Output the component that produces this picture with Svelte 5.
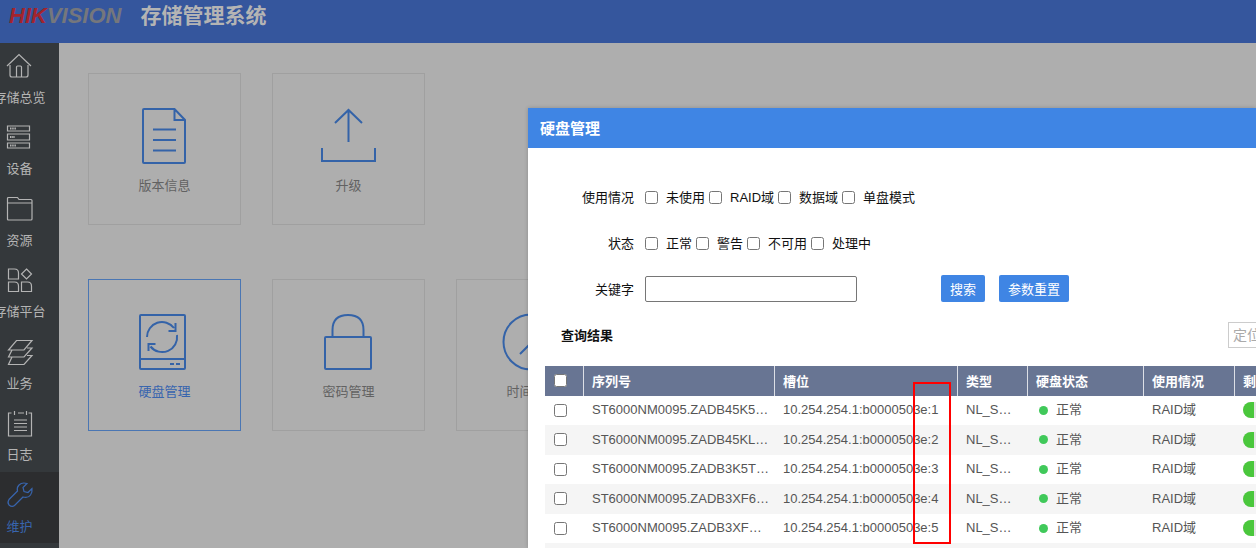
<script lang="ts">
	type Option = { id: string; text: string };

	const menu = [
		{ icon: 'home', text: '存储总览' },
		{ icon: 'device', text: '设备' },
		{ icon: 'folder', text: '资源' },
		{ icon: 'platform', text: '存储平台' },
		{ icon: 'layers', text: '业务' },
		{ icon: 'log', text: '日志' },
		{ icon: 'wrench', text: '维护' }
	];
	const activeMenu = '维护';

	const cardRows = [
		[
			{ icon: 'doc', text: '版本信息' },
			{ icon: 'upload', text: '升级' }
		],
		[
			{ icon: 'disk', text: '硬盘管理' },
			{ icon: 'lock', text: '密码管理' },
			{ icon: 'clock', text: '时间管理' }
		]
	];
	const activeCard = '硬盘管理';

	const filters: { label: string; options: Option[] }[] = [
		{
			label: '使用情况',
			options: [
				{ id: 'unused', text: '未使用' },
				{ id: 'raid', text: 'RAID域' },
				{ id: 'data', text: '数据域' },
				{ id: 'single', text: '单盘模式' }
			]
		},
		{
			label: '状态',
			options: [
				{ id: 'normal', text: '正常' },
				{ id: 'warning', text: '警告' },
				{ id: 'unavailable', text: '不可用' },
				{ id: 'processing', text: '处理中' }
			]
		}
	];

	const disks = [
		{ serial: 'ST6000NM0095.ZADB45K5…', slot: 1 },
		{ serial: 'ST6000NM0095.ZADB45KL…', slot: 2 },
		{ serial: 'ST6000NM0095.ZADB3K5T…', slot: 3 },
		{ serial: 'ST6000NM0095.ZADB3XF6…', slot: 4 },
		{ serial: 'ST6000NM0095.ZADB3XF…', slot: 5 }
	];

	let keyword = $state('');
	let position = $state('');
	let checked: string[] = $state([]);

	function reset() {
		keyword = '';
		checked = [];
	}
</script>

<div class="page">
	<header class="header">
		<span class="header__logo"><span class="header__logo-red">HIK</span>VISION</span>
		<h1 class="header__title">存储管理系统</h1>
	</header>

	<div class="layout">
		<nav class="menu">
			{#each menu as item}
				<a href="#{item.icon}" class="menu__item" class:menu__item--active={item.text === activeMenu}>
					<svg class="menu__icon" viewBox="1 0 26 26" aria-hidden="true">
						{#if item.icon === 'home'}
							<path d="M1 13 13 1.500 25 13M4 12v10q0 2 2 2h14q2 0 2-2V12M10.500 24V14q0-1 1-1h3q1 0 1 1v10" />
						{:else if item.icon === 'device'}
							<path d="M1.500 2h22v5h-22zM1.500 10h22v6h-22zM1.500 19h22v5h-22z" />
							<path d="M4 4.500h6M4 13h5M4 21.500h6" stroke-width="2" stroke-dasharray="1.500 .7" />
						{:else if item.icon === 'folder'}
							<path d="M1.500 7V2.500q0-1 1-1h9l1.500 2h12q1 0 1 1V23q0 1-1 1h-22.500q-1 0-1-1V7h24.500" />
						{:else if item.icon === 'platform'}
							<path d="M2.500 2h6q4 0 4 4v6h-10zM20.500 2l5 5-5 5-5-5zM2.500 15h6q4 0 4 4v5.500h-10zM15.500 15h6q4 0 4 4v5.500h-10z" />
						{:else if item.icon === 'layers'}
							<path d="M10.500 1.500H26L18 11H2.500zM6 11 2.500 18H18l8-9h-5M6 18l-3.500 7.500H18l8-9h-5" />
						{:else if item.icon === 'log'}
							<path d="M5.500 3h-3v23h23V3h-3M12 3h6M8.500 1v4M20.500 1v4M8 10h13M8 13.500h13M8 17h13M8 20.500h13" />
						{:else}
							<path
								d="M21 1.500q-5-1.500-8 1.500-2.500 2.500-1.500 6L3 17.500q-2 3 0 5.500 3 2.500 5.500.5L17 15q5 1.500 7.500-2 2-3 1.500-6.500l-4 4-4-1-1-4z"
							/>
						{/if}
					</svg>
					<span class="menu__text">{item.text}</span>
				</a>
			{/each}
		</nav>

		<main class="cards">
			{#each cardRows as row}
				<div class="cards__row">
					{#each row as card}
						<a href="#{card.icon}" class="card" class:card--active={card.text === activeCard}>
							<svg class="card__icon" viewBox="1 0 56 56" aria-hidden="true">
								{#if card.icon === 'doc'}
									<path d="M38.500 1H8q-1 0-1 1v52q0 1 1 1h40q1 0 1-1V12zM38.500 1v11H49M17 21.500h23M17 32h23M17 42.500h23" />
								{:else if card.icon === 'upload'}
									<path d="M28.500 34V2M15 15 28.500 2 42 15M2 40v13h53V40" />
								{:else if card.icon === 'disk'}
									<path d="M5 1h43q1 0 1 1v52q0 1-1 1H5q-1 0-1-1V2q0-1 1-1zM4 45h45M34 50h4M40 50h4" />
									<path d="M11 23A15 15 0 0 1 38 14M39.500 9v8h-7M41 21A15 15 0 0 1 14.500 32.500M12.500 37v-7h7" />
								{:else if card.icon === 'lock'}
									<path d="M6 23h44q1 0 1 1v30q0 1-1 1H6q-1 0-1-1V24q0-1 1-1zM12.500 23v-7q0-15 15.500-15t15.500 15v7" />
								{:else}
									<circle cx="27" cy="28" r="27.500" />
									<path d="M16 40 28 28V10" />
								{/if}
							</svg>
							<span class="card__text">{card.text}</span>
						</a>
					{/each}
				</div>
			{/each}
		</main>
	</div>

	<section class="dialog" aria-labelledby="dialog-title">
		<h2 id="dialog-title" class="dialog__title">硬盘管理</h2>

		<form class="filter" onsubmit={(event) => event.preventDefault()}>
			{#each filters as filter}
				<div class="filter__row" role="group" aria-label={filter.label}>
					<span class="filter__label">{filter.label}</span>
					{#each filter.options as option}
						<label class="filter__option">
							<input type="checkbox" class="checkbox" value={option.id} bind:group={checked} />
							{option.text}
						</label>
					{/each}
				</div>
			{/each}
			<div class="filter__row">
				<label for="keyword" class="filter__label">关键字</label>
				<input id="keyword" type="text" class="filter__input" bind:value={keyword} />
				<div class="filter__buttons">
					<button type="submit" class="button">搜索</button>
					<button type="button" class="button" onclick={reset}>参数重置</button>
				</div>
			</div>
		</form>

		<div class="result">
			<h3 class="result__title">查询结果</h3>
			<input
				type="text"
				class="result__search"
				placeholder="定位"
				aria-label="定位"
				bind:value={position}
			/>
		</div>

		<div class="result__body">
			<table class="table">
				<colgroup>
					<col class="table__col-check" />
					<col class="table__col-serial" />
					<col class="table__col-slot" />
					<col class="table__col-type" />
					<col class="table__col-status" />
					<col class="table__col-usage" />
					<col class="table__col-life" />
				</colgroup>
				<thead>
					<tr>
						<th><input type="checkbox" class="checkbox" aria-label="全选" /></th>
						<th>序列号</th>
						<th>槽位</th>
						<th>类型</th>
						<th>硬盘状态</th>
						<th>使用情况</th>
						<th>剩余</th>
					</tr>
				</thead>
				<tbody>
					{#each disks as disk}
						<tr>
							<td><input type="checkbox" class="checkbox" aria-label={disk.serial} /></td>
							<td>{disk.serial}</td>
							<td>10.254.254.1:b0000503e:{disk.slot}</td>
							<td>NL_S…</td>
							<td><span class="status">正常</span></td>
							<td>RAID域</td>
							<td><div class="life"><div class="life__value"></div></div></td>
						</tr>
					{/each}
					<tr><td colspan="7"></td></tr>
				</tbody>
			</table>
			<div class="marker"></div>
		</div>
	</section>
</div>

<style>
	:global(body) {
		background: #fff;
	}

	.page {
		position: relative;
		display: flex;
		flex-direction: column;
		height: 100vh;
		margin-right: 3px;
		overflow: hidden;
		background: #aeaeae;
		font-family: 'Liberation Sans', 'Noto Sans CJK SC', sans-serif;
		font-size: 13px;
	}

	.header {
		display: flex;
		flex: none;
		align-items: center;
		gap: 19px;
		box-sizing: border-box;
		height: 43px;
		padding: 0 0 12px 9px;
		background: #35569d;
		color: #b4b4b4;
	}

	.header__logo {
		color: #75777c;
		font-size: 22px;
		font-style: italic;
		font-weight: bold;
	}

	.header__logo-red {
		color: #a3242d;
	}

	.header__title {
		margin: 0;
		font-size: 21px;
		line-height: 30px;
	}

	.layout {
		display: flex;
		flex: 1;
		min-height: 0;
	}

	/* The menu is scrolled slightly past the left edge */
	.menu {
		display: flex;
		flex: none;
		flex-direction: column;
		box-sizing: border-box;
		width: 79px;
		margin-left: -20px;
		padding-bottom: 5px;
		background: #34383b;
	}

	.menu__item {
		display: flex;
		flex: 1;
		flex-direction: column;
		align-items: center;
		gap: 9px;
		box-sizing: border-box;
		padding-top: 10px;
		color: #b4b4b4;
		text-decoration: none;
	}

	.menu__item--active {
		background: #2c2d2f;
		color: #3865ae;
	}

	.menu__icon {
		flex: none;
		width: 26px;
		height: 26px;
		overflow: visible;
		fill: none;
		stroke: currentColor;
		stroke-width: 1.2;
	}

	.menu__text {
		line-height: 20px;
		white-space: nowrap;
	}

	.cards {
		display: flex;
		flex-direction: column;
		gap: 54px;
		padding: 30px 29px;
	}

	.cards__row {
		display: flex;
		gap: 31px;
	}

	.card {
		display: flex;
		flex: none;
		flex-direction: column;
		align-items: center;
		gap: 12px;
		box-sizing: border-box;
		width: 153px;
		height: 152px;
		padding-top: 34px;
		border: 1px solid #a0a0a0;
		color: #626262;
		text-decoration: none;
	}

	.card--active {
		border-color: #4a76b3;
		color: #3865ae;
	}

	.card__icon {
		flex: none;
		width: 56px;
		height: 56px;
		overflow: visible;
		fill: none;
		stroke: #3463a8;
		stroke-width: 2;
	}

	.card__text {
		line-height: 20px;
	}

	.dialog {
		position: absolute;
		top: 108px;
		right: 0;
		bottom: 0;
		left: 528px;
		overflow: hidden;
		background: #fff;
		box-shadow: 0 0 4px rgba(0, 0, 0, 0.2);
		color: #111;
	}

	.dialog__title {
		margin: 0;
		padding-left: 12px;
		background: #3f85e4;
		color: #fff;
		font-size: 15px;
		line-height: 41px;
		height: 40px;
	}

	.filter {
		display: flex;
		flex-direction: column;
		gap: 18px;
		padding-top: 34px;
	}

	.filter__row {
		display: flex;
		align-items: center;
		gap: 4px;
		height: 28px;
	}

	.filter__label {
		width: 106px;
		margin-right: 7px;
		text-align: right;
	}

	.filter__option {
		display: flex;
		align-items: center;
		gap: 8px;
	}

	.checkbox {
		width: 13px;
		height: 13px;
		margin: 0;
	}

	.filter .checkbox {
		margin-top: 2px;
	}

	.filter__input {
		box-sizing: border-box;
		width: 212px;
		height: 26px;
		margin: 2px 0 0;
		border: 1px solid #767676;
		border-radius: 2px;
	}

	.filter__buttons {
		display: flex;
		gap: 14px;
		margin-left: 80px;
	}

	.button {
		height: 27px;
		padding: 0 9px;
		border: none;
		border-radius: 2px;
		background: #3f85e4;
		color: #fff;
		font-family: inherit;
		font-size: 13px;
	}

	.result {
		display: flex;
		align-items: center;
		justify-content: space-between;
		height: 28px;
		margin-top: 19px;
		padding-left: 33px;
	}

	.result__title {
		margin: 0;
		padding-bottom: 2px;
		font-size: 13px;
	}

	.result__search {
		box-sizing: border-box;
		width: 150px;
		height: 26px;
		margin-right: -122px;
		padding: 0 4px;
		border: 1px solid #ccc;
		font-family: inherit;
		font-size: 14px;
	}

	.result__search::placeholder {
		color: #aaa;
	}

	.result__body {
		position: relative;
		margin: 17px 0 0 17px;
	}

	.table {
		width: 800px;
		border-collapse: separate;
		border-spacing: 0;
		table-layout: fixed;
		color: #555;
	}

	.table__col-check {
		width: 39px;
	}

	.table__col-serial {
		width: 191px;
	}

	.table__col-slot {
		width: 183px;
	}

	.table__col-type {
		width: 70px;
	}

	.table__col-status {
		width: 116px;
	}

	.table__col-usage {
		width: 91px;
	}

	.table th {
		height: 30px;
		padding: 0 8px 2px;
		border-right: 1px solid #dcdfe6;
		box-sizing: border-box;
		background: #687593;
		color: #fff;
		text-align: left;
	}

	.table td {
		box-sizing: border-box;
		height: 29px;
		padding: 0 8px 1px;
		line-height: 20px;
		white-space: nowrap;
	}

	.table tr:nth-child(even) td {
		height: 30px;
		background: #f5f5f5;
	}

	.table .checkbox {
		display: block;
		margin-left: 1px;
	}

	.status {
		display: flex;
		align-items: center;
		gap: 8px;
		padding-left: 3px;
	}

	.status::before {
		content: '';
		width: 9px;
		height: 9px;
		border-radius: 50%;
		background: #40c95a;
	}

	.life {
		height: 16px;
		overflow: hidden;
		border-radius: 8px;
		background: #e4e4e4;
	}

	.life__value {
		width: 11px;
		height: 16px;
		background: #4ac73c;
	}

	/* Highlights the slot numbers */
	.marker {
		position: absolute;
		top: 16px;
		left: 368px;
		box-sizing: border-box;
		width: 38px;
		height: 162px;
		border: 2px solid #f00;
	}
</style>
